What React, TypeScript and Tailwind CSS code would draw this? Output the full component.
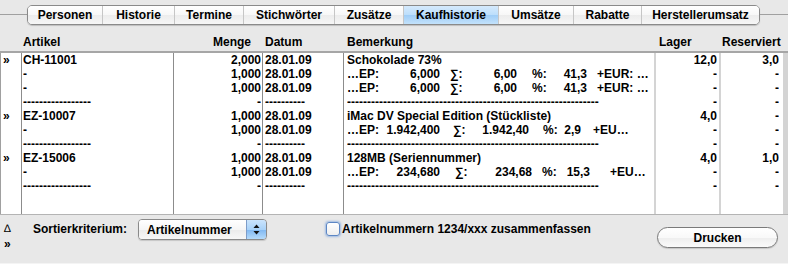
import React from 'react';

// Reiter oben
const TABS: [string, string][] = [
  ['Personen', 'w-[74px]'],
  ['Historie', 'w-[72px]'],
  ['Termine', 'w-[69px]'],
  ['Stichwörter', 'w-[91px]'],
  ['Zusätze', 'w-[69px]'],
  ['Kaufhistorie', 'w-[95px]'],
  ['Umsätze', 'w-[75px]'],
  ['Rabatte', 'w-[68px]'],
  ['Herstellerumsatz', 'w-[118px]'],
];

const D_ART = '-----------------';
const D_DAT = '----------';
const D_BEM = '---------------------------------------------------------------';

type Ep = {
  ep: string;
  sum: string;
  pct: string;
  eur: string;
  a: string;
  b: string;
  c: string;
  gb: string;
  gc: string;
  gd: string;
};

// Zeile "…EP: ... ∑: ... %: ... +EUR"
function EpLine({ e }: { e: Ep }) {
  return (
    <div className="flex whitespace-nowrap">
      <span className={`flex justify-between ${e.a}`}>
        <span>…EP:</span>
        <span>{e.ep}</span>
      </span>
      <span className={`flex justify-between ${e.gb} ${e.b}`}>
        <span>∑:</span>
        <span>{e.sum}</span>
      </span>
      <span className={`flex justify-between ${e.gc} ${e.c}`}>
        <span>%:</span>
        <span>{e.pct}</span>
      </span>
      <span className={e.gd}>{e.eur}</span>
    </div>
  );
}

const EP1: Ep = { ep: '6,000', sum: '6,00', pct: '41,3', eur: '+EUR: …', a: 'w-[93px]', b: 'w-[67px]', c: 'w-[55px]', gb: 'ml-[10px]', gc: 'ml-[15px]', gd: 'ml-[10px]' };
const EP2: Ep = { ep: '1.942,400', sum: '1.942,40', pct: '2,9', eur: '+EU…', a: 'w-[93px]', b: 'w-[76px]', c: 'w-[38px]', gb: 'ml-[13px]', gc: 'ml-[14px]', gd: 'ml-[12px]' };
const EP3: Ep = { ep: '234,680', sum: '234,68', pct: '15,3', eur: '+EU…', a: 'w-[93px]', b: 'w-[77px]', c: 'w-[48px]', gb: 'ml-[15px]', gc: 'ml-[10px]', gd: 'ml-[20px]' };

const marks = ['»', '', '', '', '»', '', '', '»', '', ''];
const artikel = ['CH-11001', '-', '-', D_ART, 'EZ-10007', '-', D_ART, 'EZ-15006', '-', D_ART];
const menge = ['2,000', '1,000', '1,000', '-', '1,000', '1,000', '-', '1,000', '1,000', '-'];
const datum = ['28.01.09', '28.01.09', '28.01.09', D_DAT, '28.01.09', '28.01.09', D_DAT, '28.01.09', '28.01.09', D_DAT];
const bemerkung: React.ReactNode[] = [
  'Schokolade 73%',
  <EpLine e={EP1} />,
  <EpLine e={EP1} />,
  D_BEM,
  'iMac DV Special Edition (Stückliste)',
  <EpLine e={EP2} />,
  D_BEM,
  '128MB (Seriennummer)',
  <EpLine e={EP3} />,
  D_BEM,
];
const lager = ['12,0', '-', '-', '-', '4,0', '-', '-', '4,0', '-', '-'];
const reserviert = ['3,0', '-', '-', '-', '-', '-', '-', '1,0', '-', '-'];

function Col({ items, className }: { items: React.ReactNode[]; className: string }) {
  return (
    <div className={`flex flex-col ${className}`}>
      {items.map((t, i) => (
        <div key={i} className="h-[14px] leading-[14px] whitespace-nowrap overflow-hidden">
          {t}
        </div>
      ))}
    </div>
  );
}

export default function App() {
  return (
    <div className="w-[788px] h-[264px] overflow-hidden bg-[#e8e8e8] text-black text-[12px] font-bold font-['Liberation_Sans',Arial,sans-serif]">
      {/* Reiter */}
      <div className="h-[25px] pt-[5px] flex items-center">
        <div className="w-[27px] h-px bg-[#a0a0a0] -mt-[2px]" />
        <div className="flex h-[20px] border border-[#8a8a8a] rounded-[5px] overflow-hidden shadow-[0_1px_1px_rgba(0,0,0,0.18)]">
          {TABS.map(([label, w], i) => (
            <div
              key={label}
              className={`${w} flex items-center justify-center leading-none ${i > 0 ? 'border-l border-[#c6c6c6]' : ''} ${
                label === 'Kaufhistorie'
                  ? 'bg-[linear-gradient(#d5eafd,#bcdefb_50%,#9fcdf7_51%,#c3e2fb)]'
                  : 'bg-[linear-gradient(#ffffff,#f7f7f7_50%,#ececec_51%,#f6f6f6)]'
              }`}
            >
              {label}
            </div>
          ))}
        </div>
        <div className="flex-1 h-px bg-[#a0a0a0] -mt-[2px]" />
      </div>

      {/* Spaltenköpfe */}
      <div className="h-[26px] flex items-end pb-[2px] leading-[14px]">
        <div className="w-[22px]" />
        <div className="w-[152px] pl-[1px]">Artikel</div>
        <div className="w-[89px] pr-[12px] text-right">Menge</div>
        <div className="w-[81px] pl-[2px]">Datum</div>
        <div className="w-[312px] pl-[3px]">Bemerkung</div>
        <div className="w-[65px] pl-[3px]">Lager</div>
        <div className="w-[62px] pl-[1px]">Reserviert</div>
      </div>

      {/* Tabelle */}
      <div className="h-[164px] flex bg-white border-t-2 border-b border-t-[#a6a6a6] border-b-[#b4b4b4]">
        <Col items={marks} className="w-[22px] pl-[2px] border-l border-r border-l-[#a0a0a0] border-r-[#8c8c8c]" />
        <Col items={artikel} className="w-[152px] pl-[1px] border-r border-[#8c8c8c]" />
        <Col items={menge} className="w-[89px] pr-[1px] text-right border-r border-[#8c8c8c]" />
        <Col items={datum} className="w-[81px] pl-[2px] border-r border-[#8c8c8c]" />
        <Col items={bemerkung} className="w-[312px] pl-[3px] border-r-2 border-[#d4d4d4]" />
        <Col items={lager} className="w-[65px] pr-[2px] text-right border-r-2 border-[#d4d4d4]" />
        <Col items={reserviert} className="w-[62px] pr-[4px] text-right" />
        <div className="flex-1 bg-[#d4d4d4]" />
      </div>

      {/* Fußleiste */}
      <div className="h-[49px] flex items-start leading-[14px] border-b border-[#f4f4f4]">
        <div className="w-[22px] pl-[4px] pt-[6px] flex flex-col gap-[2px]">
          <span className="font-normal text-[11px]">∆</span>
          <span>»</span>
        </div>
        <div className="ml-[11px] mt-[7px]">Sortierkriterium:</div>
        <div className="ml-[11px] mt-[4px] w-[129px] h-[21px] flex border border-[#8a8a8a] rounded-[4px] overflow-hidden shadow-[0_1px_1px_rgba(0,0,0,0.15)]">
          <div className="flex-1 flex items-center pl-[8px] bg-[linear-gradient(#ffffff,#f6f6f6_50%,#ebebeb_51%,#f7f7f7)]">
            Artikelnummer
          </div>
          <div className="w-[20px] flex items-center justify-center border-l border-[#7d9cc8] bg-[linear-gradient(#cbe4fc,#a9d2f8_50%,#7fb7f1_51%,#b5dbfb)]">
            <svg width="7" height="11" viewBox="0 0 7 11">
              <path d="M3.5 0.5 L6.5 4 L0.5 4 Z" fill="#111" />
              <path d="M3.5 10.5 L6.5 7 L0.5 7 Z" fill="#111" />
            </svg>
          </div>
        </div>
        <div className="ml-[59px] mt-[7px] w-[14px] h-[14px] rounded-[3px] border border-[#5c86c4] bg-[linear-gradient(#ffffff,#eeeeee)] shadow-[0_0_2px_1px_rgba(100,150,220,0.55)]" />
        <div className="ml-[2px] mt-[7px]">Artikelnummern 1234/xxx zusammenfassen</div>
        <div className="ml-auto mr-[10px] mt-[12px] w-[121px] h-[21px] flex items-center justify-center rounded-full border border-[#7a7a7a] bg-[linear-gradient(#ffffff,#f9f9f9_50%,#eeeeee_51%,#fafafa)] shadow-[0_1px_1px_rgba(0,0,0,0.15)]">
          Drucken
        </div>
      </div>
    </div>
  );
}
